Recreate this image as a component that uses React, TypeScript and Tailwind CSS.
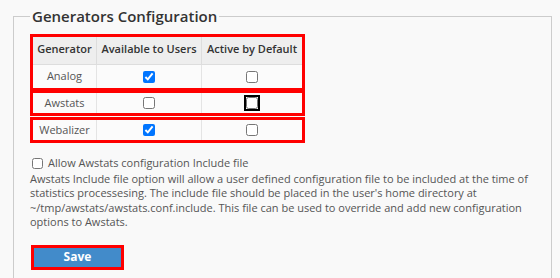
import React from "react";

const rows = [
  { name: "Analog", users: true, active: false },
  { name: "Awstats", users: false, active: false, focus: true },
  { name: "Webalizer", users: true, active: false },
];

const cols = "grid grid-cols-[63px_105px_101px]";

const Box = ({ checked, focus }: { checked: boolean; focus?: boolean }) => (
  <input
    type="checkbox"
    defaultChecked={checked}
    className={
      "h-[12px] w-[12px] " + (focus ? "outline-2 outline-offset-0 outline-black rounded-[2px]" : "")
    }
  />
);

export default function App() {
  return (
    <div
      className="min-h-[278px] w-[560px] overflow-hidden bg-[#f9f9f9] pt-[6px] text-[#555]"
      style={{ fontFamily: "'Open Sans', sans-serif" }}
    >
      <fieldset className="ml-[13px] w-[539px] border border-[#cccccc] pl-[16px] pb-[30px]">
        <legend className="px-[2px] text-[15px] leading-[20px] font-semibold text-[#333]">
          Generators Configuration
        </legend>

        <div className="mt-[8px] w-[275px] text-[11px]">
          <div className="border-[3px] border-[#ff0000]">
            <div className={cols + " h-[28px] border-b border-[#dddddd] bg-[#eeeeee] font-semibold text-[#333]"}>
              <div className="flex items-center justify-center pb-[2px]">Generator</div>
              <div className="flex items-center justify-center border-l border-[#dddddd] pb-[2px]">
                Available to Users
              </div>
              <div className="flex items-center justify-center border-l border-[#dddddd] pb-[2px]">
                Active by Default
              </div>
            </div>
            <Row {...rows[0]} h="h-[23px]" />
          </div>
          <div className="-mt-px border-[3px] border-[#ff0000]">
            <Row {...rows[1]} h="h-[20px]" />
          </div>
          <div className="mt-px border-[3px] border-[#ff0000]">
            <Row {...rows[2]} h="h-[20px]" />
          </div>
        </div>

        <div className="mt-[13px] w-[510px] text-[11px] leading-[14.5px]">
          <label className="flex items-center gap-[5px] pl-[2px]">
            <input type="checkbox" className="h-[11px] w-[11px]" />
            <span>Allow Awstats configuration Include file</span>
          </label>
          <p className="mt-px">
            Awstats Include file option will allow a user defined configuration file to be included at the time
            of statistics processesing. The include file should be placed in the user's home directory at
            ~/tmp/awstats/awstats.conf.include. This file can be used to override and add new configuration
            options to Awstats.
          </p>
        </div>

        <button className="ml-px mt-[15px] h-[25px] w-[93px] border-[3px] border-[#ff0000] bg-[#428bca] text-[12px] font-bold text-white">
          Save
        </button>
      </fieldset>
    </div>
  );
}

function Row({
  name,
  users,
  active,
  focus,
  h,
}: {
  name: string;
  users: boolean;
  active: boolean;
  focus?: boolean;
  h: string;
}) {
  return (
    <div className={cols + " " + h + " bg-[#fbfbfb]"}>
      <div className="flex items-center justify-center">{name}</div>
      <div className="flex items-center justify-center border-l border-[#e4e4e4]">
        <Box checked={users} />
      </div>
      <div className="flex items-center justify-center border-l border-[#e4e4e4]">
        <Box checked={active} focus={focus} />
      </div>
    </div>
  );
}
